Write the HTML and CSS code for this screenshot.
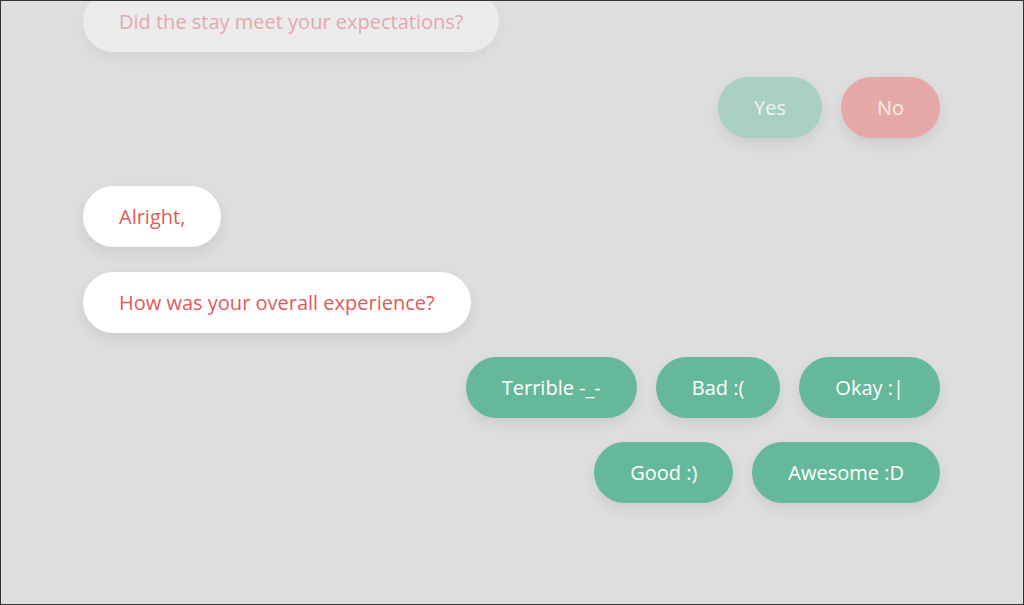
FILE: index.html
```html
<!DOCTYPE html>
<html>
<head>
<meta charset="utf-8">
<link rel="stylesheet" href="styles.css">
</head>
<body>
<div class="frame">
  <div class="chat">
    <div class="row left">
      <div class="bubble bot faded">Did the stay meet your expectations?</div>
    </div>
    <div class="row right">
      <div class="chip yes faded-chip">Yes</div>
      <div class="chip no faded-chip">No</div>
    </div>
    <div class="row left section">
      <div class="bubble bot">Alright,</div>
    </div>
    <div class="row left">
      <div class="bubble bot">How was your overall experience?</div>
    </div>
    <div class="row right">
      <div class="chip">Terrible -_-</div>
      <div class="chip">Bad :(</div>
      <div class="chip">Okay :|</div>
    </div>
    <div class="row right">
      <div class="chip">Good :)</div>
      <div class="chip">Awesome :D</div>
    </div>
  </div>
</div>
</body>
</html>
```
FILE: styles.css
```css
html, body {
  margin: 0;
  padding: 0;
}
body {
  font-family: "Open Sans", "Noto Sans", sans-serif;
}
.frame {
  width: 1024px;
  height: 605px;
  box-sizing: border-box;
  border: 1px solid #333;
  background: #dedede;
  overflow: hidden;
}
.chat {
  display: flex;
  flex-direction: column;
  gap: 24.4px;
  margin: -9.6px 83px 0 82px;
}
.row {
  display: flex;
  gap: 19px;
}
.row.left { justify-content: flex-start; }
.row.right { justify-content: flex-end; }
.row.section { margin-top: 24px; }
.bubble, .chip {
  height: 61px;
  box-sizing: border-box;
  display: flex;
  align-items: center;
  padding: 0 36px;
  border-radius: 31px;
  font-size: 20px;
  white-space: nowrap;
  box-shadow: 0 6px 14px rgba(0, 0, 0, 0.08);
}
.bubble.bot {
  background: #ffffff;
  color: #e05a5b;
}
.bubble.faded {
  background: #ebebeb;
  color: #e3aaa9;
  box-shadow: 0 6px 14px rgba(0, 0, 0, 0.04);
}
.chip {
  background: #66b89b;
  color: #ffffff;
}
.chip.yes.faded-chip {
  background: #a9cfc3;
  color: #eef6f2;
}
.chip.no.faded-chip {
  background: #e5a8a6;
  color: #f8eceb;
}
```
